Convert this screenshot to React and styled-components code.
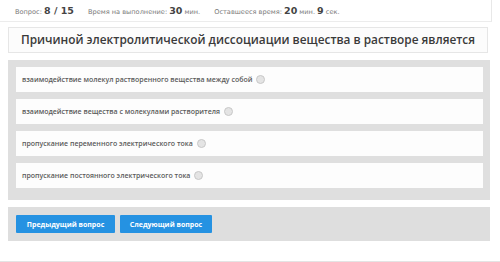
import React from 'react';
import styled, { createGlobalStyle } from 'styled-components';

const GlobalStyle = createGlobalStyle`
  html, body {
    margin: 0;
    padding: 0;
    background: #ffffff;
  }
  body {
    font-family: "Open Sans", "DejaVu Sans", sans-serif;
  }
`;

const Page = styled.div`
  width: 500px;
  height: 262px;
  box-sizing: border-box;
  border-bottom: 1px solid #e4e4e4;
  overflow: hidden;
`;

const InfoBar = styled.div`
  width: 492px;
  height: 22px;
  box-sizing: border-box;
  border-right: 1px solid #e8e8e8;
  border-bottom: 1px solid #ececec;
  display: flex;
  align-items: center;
  padding: 0 0 1px 15px;
  gap: 14px;
`;

const InfoItem = styled.span`
  font-family: "DejaVu Sans", Verdana, sans-serif;
  font-size: 6.6px;
  color: #7a7a7a;
  white-space: nowrap;
`;

const Num = styled.b`
  font-size: 9.5px;
  font-weight: bold;
  color: #444;
`;

const Content = styled.div`
  width: 482px;
  margin: 0 0 0 8px;
  padding-top: 5px;
`;

const Title = styled.div`
  width: 480px;
  height: 26px;
  box-sizing: border-box;
  border: 1px solid #e6e6e6;
  background: #fcfcfc;
  display: flex;
  align-items: center;
  justify-content: center;
  padding-bottom: 2px;
  font-family: "Open Sans", sans-serif;
  font-weight: 600;
  font-size: 11.85px;
  color: #3a3a3a;
  white-space: nowrap;
`;

const Options = styled.div`
  margin-top: 7px;
  background: #dfdfdf;
  padding: 7px 7px 12px 8px;
  display: flex;
  flex-direction: column;
  gap: 7px;
`;

const Option = styled.label`
  height: 25px;
  background: #fdfdfd;
  display: flex;
  align-items: center;
  padding-left: 6px;
  gap: 4px;
  font-family: "Open Sans", sans-serif;
  font-weight: 600;
  font-size: 7px;
  color: #5a5a5a;
  white-space: nowrap;
`;

const Radio = styled.span`
  width: 7px;
  height: 7px;
  border-radius: 50%;
  border: 1px solid #c8c8c8;
  background: #e4e4e4;
`;

const Actions = styled.div`
  margin-top: 7px;
  background: #dedede;
  padding: 8px;
  display: flex;
  gap: 5px;
`;

const Button = styled.button`
  height: 18px;
  width: ${(p) => p.$w}px;
  border: none;
  border-radius: 1px;
  background: #2592e2;
  color: #ffffff;
  font-family: "Open Sans", sans-serif;
  font-weight: 700;
  font-size: 7px;
  padding: 0;
  cursor: pointer;
`;

const answers = [
  'взаимодействие молекул растворенного вещества между собой',
  'взаимодействие вещества с молекулами растворителя',
  'пропускание переменного электрического тока',
  'пропускание постоянного электрического тока',
];

export default function App() {
  return (
    <Page>
      <GlobalStyle />
      <InfoBar>
        <InfoItem>
          Вопрос: <Num>8 / 15</Num>
        </InfoItem>
        <InfoItem>
          Время на выполнение: <Num>30</Num> мин.
        </InfoItem>
        <InfoItem>
          Оставшееся время: <Num>20</Num> мин. <Num>9</Num> сек.
        </InfoItem>
      </InfoBar>
      <Content>
        <Title>Причиной электролитической диссоциации вещества в растворе является</Title>
        <Options>
          {answers.map((a) => (
            <Option key={a}>
              {a}
              <Radio />
            </Option>
          ))}
        </Options>
        <Actions>
          <Button $w={99}>Предыдущий вопрос</Button>
          <Button $w={92}>Следующий вопрос</Button>
        </Actions>
      </Content>
    </Page>
  );
}
